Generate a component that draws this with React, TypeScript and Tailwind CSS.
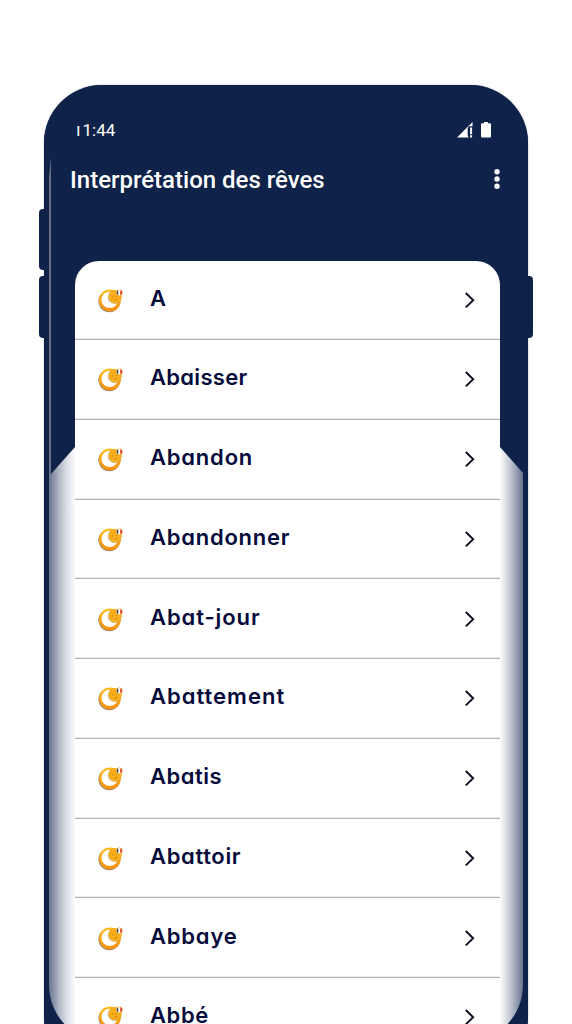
const entries = [
  { label: 'A', tracking: 'tracking-normal' },
  { label: 'Abaisser', tracking: 'tracking-[0.3px]' },
  { label: 'Abandon', tracking: 'tracking-[0.8px]' },
  { label: 'Abandonner', tracking: 'tracking-[0.75px]' },
  { label: 'Abat-jour', tracking: 'tracking-[0.9px]' },
  { label: 'Abattement', tracking: 'tracking-[1px]' },
  { label: 'Abatis', tracking: 'tracking-[0.5px]' },
  { label: 'Abattoir', tracking: 'tracking-[0.65px]' },
  { label: 'Abbaye', tracking: 'tracking-[0.8px]' },
  { label: 'Abbé', tracking: 'tracking-[0.6px]' },
];

function MoonIcon() {
  return (
    <svg width="28" height="28" viewBox="0 0 28 28" className="shrink-0">
      <defs>
        <linearGradient id="moon" x1="0" y1="0" x2="0" y2="1">
          <stop offset="0" stopColor="#fdbd1a" />
          <stop offset="1" stopColor="#f98f10" />
        </linearGradient>
      </defs>
      {/* drop shadow, disc, then the hollow crescent with the face over it */}
      <circle cx="12.3" cy="15.3" r="10.9" fill="#70695c" opacity="0.8" />
      <circle cx="12.900" cy="14.500" r="10.900" fill="url(#moon)" />
      <circle cx="12.700" cy="13.900" r="8.200" fill="#fff" />
      <circle cx="17.700" cy="11.200" r="6.900" fill="#a98546" opacity="0.6" />
      <circle cx="18.100" cy="10.700" r="6.600" fill="#fbae1b" />
      <path d="M14.800 11h1.300M19 10.300h1.200M17.500 14.100q1.500.6 2.800-.9" fill="none" stroke="#b47a16" strokeWidth="0.900" />
      <circle cx="22.400" cy="6.700" r="3.300" fill="#e9b55a" />
      <path d="M21.400 4.300a2.600 2.600 0 0 0 0 4.800z" fill="#1b3b99" />
      <path d="M21.400 4.100h2v5.200h-2z" fill="#fff" />
      <path d="M23.400 4.300a2.600 2.600 0 0 1 0 4.800z" fill="#d52731" />
    </svg>
  );
}

function StatusIcons() {
  return (
    <div className="flex items-center gap-2">
      <svg width="16" height="16" viewBox="0 0 16 16" fill="#fff">
        <path d="M0 15.500 15.500 0v4.200h-3.600l-1.200 1.700v7.600l.9 2z" />
        <path d="M13.100 5.500h2v6.700h-2zM13.100 13.300h2v2.200h-2z" />
      </svg>
      <svg width="10" height="16" viewBox="0 0 10 16" fill="#fff">
        <path d="M3 0h4v1.200h2q1 0 1 1v12.300q0 1-1 1H1q-1 0-1-1V2.200q0-1 1-1h2z" />
      </svg>
    </div>
  );
}

function Row({ label, tracking }: { label: string; tracking: string }) {
  return (
    <li className="flex h-[79.75px] items-center gap-[25px] border-b border-[#b3b3b3] pr-[23px] pl-[22px] shadow-[inset_0_-1px_0_#ececec] first:h-[79px]">
      <MoonIcon />
      <span
        className={`flex-1 pb-1 font-['Inter',sans-serif] text-[22px] leading-8 font-semibold text-[#050b3b] [font-feature-settings:'cv11'] ${tracking}`}
      >
        {label}
      </span>
      <svg width="14" height="18" viewBox="0 0 14 18">
        <path d="M2.800 2 10.200 9.200 2.800 16.400" fill="none" stroke="#0b0b20" strokeWidth="1.900" />
      </svg>
    </li>
  );
}

export default function App() {
  return (
    <div className="flex h-[1024px] w-[572px] items-start justify-center overflow-hidden bg-white pt-[85px]">
      <div className="flex w-[5px] shrink-0 flex-col gap-1.5 pt-[124px]">
        <div className="h-[61px] rounded-l-[4px] bg-[#0f2249]" />
        <div className="h-[62px] rounded-l-[4px] bg-[#0f2249]" />
      </div>

      <div className="relative h-[990px] w-[484px] shrink-0 rounded-[58px] bg-[#0f2249] shadow-[0_0_1px_#0f2249]">
        {/* bezel highlight */}
        <div className="absolute top-[72px] left-[5px] h-[330px] w-[2px] bg-[#68738b] [clip-path:polygon(100%_0,100%_100%,0_100%,0_20px)]" />

        {/* screen behind the list */}
        <div className="absolute top-[362px] left-[5px] h-[595px] w-[474px] rounded-b-[57px] bg-[linear-gradient(90deg,#6b7690_0px,#7c879d_3px,#b0b7c5_10px,#dcdfe6_18px,#f7f8fa_25px,#ffffff_27px,#ffffff_450px,#f7f8fa_452px,#dcdfe5_457px,#a9b0bf_465px,#67738d_474px)] [clip-path:polygon(0_28px,2px_27px,26px_0,451px_0,474px_26px,100%_100%,0_100%)]" />

        <div className="relative flex flex-col">
          <div className="flex h-[90px] items-center justify-between pr-[37px] pl-[29px]">
            <div className="flex font-['Roboto',sans-serif] text-[17px] leading-5 text-white">
              <span className="[clip-path:inset(6px_0_0_4px)]">1</span>
              <span>1:44</span>
            </div>
            <StatusIcons />
          </div>
          <header className="flex h-[22px] items-start justify-between pr-[28px] pl-[26px]">
            <h1 className="-mt-3 font-['Roboto',sans-serif] text-[24px] leading-[34px] font-medium text-white">
              Interprétation des rêves
            </h1>
            <svg width="6" height="24" viewBox="0 0 6 24" fill="#fff" className="-mt-[7px]">
              <circle cx="3" cy="3.700" r="2.700" />
              <circle cx="3" cy="11" r="2.700" />
              <circle cx="3" cy="18.300" r="2.700" />
            </svg>
          </header>

          <div className="px-[31px] pt-16 pr-[28px]">
            <ul className="flex h-[763px] flex-col overflow-hidden rounded-t-[24px] bg-white *:shrink-0">
              {entries.map((entry) => (
                <Row key={entry.label} {...entry} />
              ))}
            </ul>
          </div>
        </div>
      </div>

      <div className="w-[5px] shrink-0 pt-[191px]">
        <div className="h-[62px] rounded-r-[4px] bg-[#0f2249]" />
      </div>
    </div>
  );
}
